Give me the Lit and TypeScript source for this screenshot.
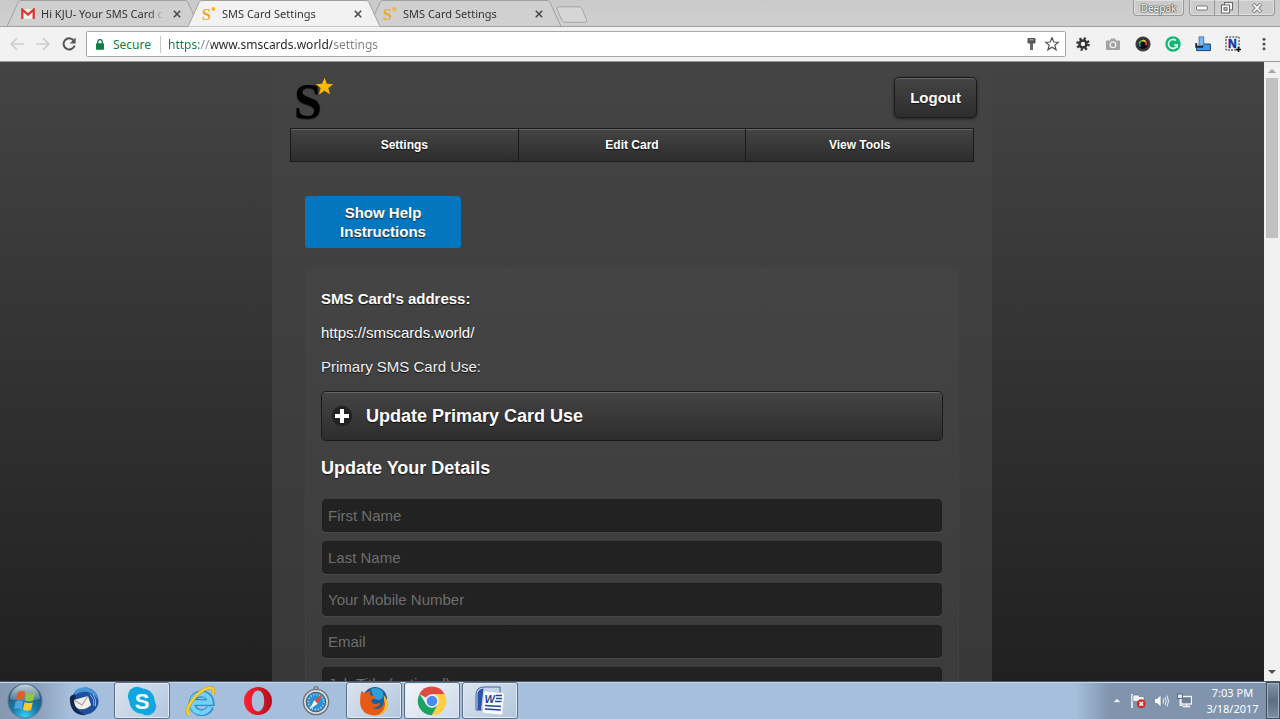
import { LitElement, html, css, svg, nothing } from "lit";
import { customElement, property } from "lit/decorators.js";

const starPoints = "12,1 15,8.6 23,9 16.8,14 19,22 12,17.4 5,22 7.2,14 1,9 9,8.6";

const icons: Record<string, unknown> = {
  gmail: svg`<svg width="14" height="12" viewBox="0 0 14 12"><rect x="1" y="1" width="12" height="10" fill="#eee"/><path d="M1.3 11V1.6L7 6.6l5.7-5V11" fill="none" stroke="#d8382b" stroke-width="2.2"/></svg>`,
  sms: svg`<svg width="14" height="16" viewBox="0 0 14 16"><text x="0" y="14" font-family="Liberation Serif, serif" font-weight="700" font-size="16" fill="#e9a92c">S</text><circle cx="11.3" cy="3" r="1.9" fill="#f9b61d"/></svg>`,
  close: svg`<svg width="8" height="8" viewBox="0 0 8 8"><path d="M.8.8l6.4 6.4M7.2.8L.8 7.2" stroke="#4a4a4a" stroke-width="1.6"/></svg>`,
  back: svg`<svg width="14" height="14" viewBox="0 0 14 14"><path d="M14 7H1.5M7 1.2L1.2 7 7 12.8" fill="none" stroke="#cecece" stroke-width="1.7"/></svg>`,
  forward: svg`<svg width="14" height="14" viewBox="0 0 14 14"><path d="M0 7h12.5M7 1.2L12.8 7 7 12.8" fill="none" stroke="#cecece" stroke-width="1.7"/></svg>`,
  reload: svg`<svg width="14" height="14" viewBox="0 0 14 14"><path d="M11.6 3.4A5.6 5.6 0 1 0 12.6 8.4" fill="none" stroke="#555" stroke-width="2"/><path d="M13.6.4v6H7.8z" fill="#555"/></svg>`,
  lock: svg`<svg width="8" height="11" viewBox="0 0 8 11"><rect y="4.3" width="8" height="6.4" rx=".8" fill="#0b8043"/><path d="M1.8 5V2.8a2.2 2.2 0 0 1 4.4 0V5" fill="none" stroke="#0b8043" stroke-width="1.3"/></svg>`,
  key: svg`<svg width="9" height="12" viewBox="0 0 9 12"><rect x=".5" width="8" height="5.5" rx="1.2" fill="#555"/><rect x="3" y="5" width="3" height="7" fill="#666"/><path d="M2.5 1.8h4" stroke="#bbb"/></svg>`,
  star: svg`<svg width="14" height="14" viewBox="0 0 24 24"><polygon points=${starPoints} fill="none" stroke="#505050" stroke-width="2"/></svg>`,
  gear: svg`<svg width="14" height="14" viewBox="0 0 14 14"><circle cx="7" cy="7" r="3.5" fill="none" stroke="#333" stroke-width="2.6"/><circle cx="7" cy="7" r="5.6" fill="none" stroke="#333" stroke-width="2.4" stroke-dasharray="2.2 2.2"/></svg>`,
  camera: svg`<svg width="14" height="12" viewBox="0 0 14 12"><path d="M1 2.4h3L5 .5h4l1 1.9h3q1 0 1 1V11q0 1-1 1H1q-1 0-1-1V3.4q0-1 1-1z" fill="#a3a3a3"/><circle cx="7" cy="6.8" r="2.9" fill="#a3a3a3" stroke="#f2f2f2" stroke-width="1.3"/></svg>`,
  lens: svg`<svg width="16" height="16" viewBox="0 0 16 16"><circle cx="8" cy="8" r="7.6" fill="#3a3a40"/><circle cx="8" cy="8" r="5" fill="#0c0c12"/><path d="M4.4 8A3.6 3.6 0 0 1 7 4.6" stroke="#38b54a" stroke-width="2" fill="none"/><path d="M7 4.6A3.6 3.6 0 0 1 10.8 6" stroke="#e8c52c" stroke-width="2" fill="none"/><path d="M10.8 6a3.6 3.6 0 0 1 .2 3.4" stroke="#e23c3c" stroke-width="2" fill="none"/><path d="M4.4 8a3.6 3.6 0 0 0 1.2 2.6" stroke="#3c7be2" stroke-width="1.6" fill="none"/></svg>`,
  grammarly: svg`<svg width="16" height="16" viewBox="0 0 16 16"><circle cx="8" cy="8" r="7.7" fill="#15b573"/><path d="M11 4.6A4.5 4.5 0 1 0 12.3 9H9" fill="none" stroke="#e9fff5" stroke-width="1.6"/><path d="M12.3 8.5v3.3" stroke="#e9fff5" stroke-width="1.4"/></svg>`,
  blocks: svg`<svg width="16" height="16" viewBox="0 0 16 16"><path d="M7 8h8.4v6.6H1.6V10H7z" fill="#3e9af0" stroke="#23405e"/><path d="M4 .8h4.800v8.800H4z" fill="#7bb8f0" stroke="#456a9a" stroke-width=".8"/><path d="M1.200 7v3.800h7" fill="none" stroke="#20262e" stroke-width="1.800"/></svg>`,
  ntool: svg`<svg width="16" height="16" viewBox="0 0 16 16"><rect x="1" y="1" width="13" height="13" fill="#f4f4ff" stroke="#222" stroke-dasharray="2 1.2"/><text x="3" y="12" font-family="Liberation Sans, sans-serif" font-weight="700" font-size="12" fill="#12379a" stroke="#12379a" stroke-width=".5">N</text><path d="M13.5 11v5M11 13.5h5" stroke="#111" stroke-width="1.6"/></svg>`,
  menu: svg`<svg width="4" height="14" viewBox="0 0 4 14" fill="#555"><circle cx="2" cy="2.2" r="1.5"/><circle cx="2" cy="7" r="1.5"/><circle cx="2" cy="11.8" r="1.5"/></svg>`,
  min: svg`<svg width="12" height="6" viewBox="0 0 12 6"><rect x=".5" y="1" width="11" height="4" rx="1" fill="#fff" stroke="#777"/></svg>`,
  restore: svg`<svg width="12" height="12" viewBox="0 0 12 12"><rect x="3.5" y=".5" width="8" height="7.5" fill="#f4f4f4" stroke="#666"/><rect x=".5" y="3" width="8" height="8" fill="#fff" stroke="#666"/><rect x="3" y="5.7" width="3" height="2.6" fill="#ccc" stroke="#666"/></svg>`,
  winClose: svg`<svg width="12" height="10" viewBox="0 0 12 10"><path d="M2 1l8 8M10 1L2 9" stroke="#777" stroke-width="3.6"/><path d="M2.4 1.4l7.2 7.2M9.6 1.4L2.4 8.6" stroke="#fafafa" stroke-width="1.8"/></svg>`,
  plus: svg`<svg width="22" height="22" viewBox="0 0 22 22"><circle cx="11" cy="11" r="10.2" fill="#222"/><path d="M11 4v14M4 11h14" stroke="#fff" stroke-width="4"/></svg>`,
  up: svg`<svg width="8" height="4" viewBox="0 0 8 4"><path d="M0 4l4-4 4 4z" fill="#a3a3a3"/></svg>`,
  down: svg`<svg width="8" height="4" viewBox="0 0 8 4"><path d="M0 0l4 4 4-4z" fill="#505050"/></svg>`,
  windows: svg`<svg width="36" height="36" viewBox="0 0 36 36"><defs><radialGradient id="orb" cx=".5" cy=".95" r=".85"><stop offset="0" stop-color="#35d3f5"/><stop offset=".45" stop-color="#1a79a8"/><stop offset="1" stop-color="#24506f"/></radialGradient><linearGradient id="gloss" x2="0" y2="1"><stop offset="0" stop-color="#fff" stop-opacity=".75"/><stop offset="1" stop-color="#fff" stop-opacity=".15"/></linearGradient></defs><circle cx="18" cy="18" r="17" fill="url(#orb)" stroke="#54758f"/><path d="M3 16a15 14.5 0 0 1 30 0q-15 4-30 0z" fill="url(#gloss)"/><path d="M10.6 9.2q4-2.2 7.6-.2l-1.6 7.8q-3.8-1.8-7.6.2z" fill="#ea5a24"/><path d="M19.6 9.6q4 2 8.4.2l-1.8 7.8q-4 1.8-8.2-.2z" fill="#93c83e"/><path d="M8.6 18.6q4-2 7.6-.2l-1.6 7.6q-3.8-1.8-7.6.2z" fill="#4ba4e6"/><path d="M17.6 19q4 2 8.2.2L24 27q-4 1.8-8-.4z" fill="#fdc72f"/></svg>`,
  thunderbird: svg`<svg width="30" height="30" viewBox="0 0 30 30"><circle cx="16" cy="15" r="13.500" fill="#1f4f9f"/><path d="M6 4.500q7-5 14-2.500 8 3 9.500 12-4-6-11-8-7-1-13 3z" fill="#4a93d8"/><path d="M10 2q3-1 5 0M21 8q5 5 4 12M24 8q4 6 2.500 12" fill="none" stroke="#7db8ea" stroke-width="1"/><path d="M1 11q3-4 6-1-3 8 1 13 4 5 10 6-10 1-14-5-4-6-3-13z" fill="#16264f"/><path d="M5 14l14-4 3 9q-4 5-12 4-5-2-5-9z" fill="#f2f0ec"/><path d="M5 14l8 5 6-9" fill="none" stroke="#a99f94" stroke-width="1.2"/></svg>`,
  skype: svg`<svg width="30" height="30" viewBox="0 0 30 30"><circle cx="10" cy="10" r="9.2" fill="#0fa6e2"/><circle cx="20" cy="20" r="9.2" fill="#0fa6e2"/><circle cx="15" cy="15" r="12.6" fill="#0fa6e2"/><text x="15" y="22.6" text-anchor="middle" font-family="Liberation Sans, sans-serif" font-weight="700" font-size="22" fill="#fff">S</text></svg>`,
  ie: svg`<svg width="30" height="30" viewBox="0 0 30 30"><path d="M25.500 20.500A9.400 9.400 0 1 1 26 16.500H9" fill="none" stroke="#2a8fcf" stroke-width="7"/><path d="M25 20.500A9.400 9.400 0 1 1 25.500 16.500H9" fill="none" stroke="#74d0f5" stroke-width="4.600"/><path d="M5 28.500q-6-2 2-13.500T24 1.800q6-1 4 6" fill="none" stroke="#c99a14" stroke-width="3.200"/><path d="M5 28.500q-6-2 2-13.500T24 1.800q6-1 4 6" fill="none" stroke="#fbd83a" stroke-width="2"/></svg>`,
  opera: svg`<svg width="30" height="30" viewBox="0 0 30 30"><defs><linearGradient id="op" x2="1"><stop offset="0" stop-color="#ff1f33"/><stop offset="1" stop-color="#b3101e"/></linearGradient></defs><path fill-rule="evenodd" d="M15 1a14 14 0 1 0 0 28 14 14 0 1 0 0-28zM15 4.6c4 0 6.2 4.6 6.2 10.4S19 25.4 15 25.4 8.8 20.8 8.8 15 11 4.6 15 4.6z" fill="url(#op)"/></svg>`,
  safari: svg`<svg width="28" height="30" viewBox="0 0 28 30"><circle cx="14" cy="2.6" r="2" fill="none" stroke="#777" stroke-width="1.2"/><circle cx="14" cy="16" r="12.6" fill="#d9dcdf" stroke="#6e7276" stroke-width="1.4"/><circle cx="14" cy="16" r="9.8" fill="#2c8fd0" stroke="#4b5c6c"/><circle cx="14" cy="16" r="7.6" fill="none" stroke="#bfe2f6" stroke-width="1.6" stroke-dasharray="1 2"/><path d="M20.5 8.5l-4.8 9.2-3.4-3.4z" fill="#e04b2f"/><path d="M7.5 23.5l4.8-9.2 3.4 3.4z" fill="#f3f6f8"/></svg>`,
  firefox: svg`<svg width="30" height="30" viewBox="0 0 30 30"><circle cx="16" cy="13" r="12" fill="#17609f"/><path d="M12 3q7-3 12 3 1 5-3 8l-6-1z" fill="#2f9fd9"/><path d="M2.5 5q2 2 4 2 3-2 6-2-2 2-1.5 4 3 1 5.5 1.5-.5 2-4 3.5 0 3 3 4 3 0 5-1 2 1-1 3-3 2-6 1 5 4 9 0 4-4 2-12 5 6 4 11-2 9-12.5 9.5Q3 29 1.2 18 .8 10 2.5 5z" fill="#e55b16"/><path d="M24.5 9q5 6 4 11-2 8-10 9.3 8-4 7.5-12z" fill="#fbc52d"/></svg>`,
  chrome: svg`<svg width="30" height="30" viewBox="0 0 30 30"><path d="M15 15L2.4 8A14.3 14.3 0 0 1 28 9z" fill="#dd4b3e"/><path d="M15 15V8h12.4A14.3 14.3 0 0 1 14 29.3L21 18z" fill="#ffce42"/><path d="M15 15l5.6 4-6 10.3A14.3 14.3 0 0 1 2.6 7.9L9 18z" fill="#1aa260"/><circle cx="15" cy="15" r="6.8" fill="#f4f4f4"/><circle cx="15" cy="15" r="5.3" fill="#4a8af4"/></svg>`,
  word: svg`<svg width="30" height="30" viewBox="0 0 30 30"><path d="M1 24V9q0-8 8-8h16v23z" fill="#c4d5ef" stroke="#3e62a8"/><path d="M2.5 24V9q0-6 6-6.5L6 24z" fill="#2d54a5"/><path d="M9 5l20.5 2-2 22L7 27z" fill="#fcfdff" stroke="#b8c3d6" stroke-width=".6"/><text x="9.5" y="16.5" font-family="Liberation Sans, sans-serif" font-weight="700" font-style="italic" font-size="11" fill="#1f478f">W</text><path d="M21 9.5h6M21 12.5h6M20 15.5h6.5M10 19.5l16 1M9.8 23l16 1" stroke="#1f478f" stroke-width="1.7"/></svg>`,
  trayUp: svg`<svg width="8" height="5" viewBox="0 0 8 5"><path d="M0 4.5L4 .5l4 4z" fill="#eef3f8" stroke="#5a6b80" stroke-width=".4"/></svg>`,
  flag: svg`<svg width="15" height="16" viewBox="0 0 15 16"><path d="M1 1v14" stroke="#f4f4f4" stroke-width="1.6"/><path d="M2 2h6v1.5h5V10H8V8.5H2z" fill="#f4f4f4" stroke="#596a7e" stroke-width=".6"/><circle cx="10.3" cy="10.8" r="4.5" fill="#d92a20"/><path d="M8.5 9l3.6 3.6M12.1 9l-3.6 3.6" stroke="#fff" stroke-width="1.5"/></svg>`,
  volume: svg`<svg width="15" height="14" viewBox="0 0 15 14"><path d="M.5 4.5H3L7 .8v12.4L3 9.5H.5z" fill="#fafafa" stroke="#5a6b80" stroke-width=".6"/><path d="M9 4.5q1.6 2.5 0 5M11 3q2.6 4 0 8M13 1.5q3 5.5 0 11" fill="none" stroke="#eef3f8"/></svg>`,
  network: svg`<svg width="15" height="15" viewBox="0 0 15 15"><rect x="4" y="3.5" width="10.5" height="7.5" fill="#6d8199" stroke="#fafafa" stroke-width="1.3"/><path d="M6 13.5h7M9.5 11v2.5" stroke="#fafafa" stroke-width="1.4"/><rect x=".5" y="1" width="5" height="4.5" fill="#dfe6ee" stroke="#46566a" stroke-width=".8"/><path d="M3 6v6.500h3" fill="none" stroke="#fafafa"/></svg>`,
};

const iconButtonCss = css`
  button {
    font: inherit;
    color: inherit;
    background: none;
    border: 0;
    padding: 0;
    margin: 0;
  }
  svg {
    display: block;
    flex: none;
  }
`;

@customElement("browser-tab")
class BrowserTab extends LitElement {
  @property() icon = "sms";
  @property() label = "";
  @property({ type: Boolean, reflect: true }) active = false;

  static styles = [
    iconButtonCss,
    css`
      :host {
        display: grid;
        width: 192px;
        height: 27px;
        margin-right: -11px;
      }
      :host([active]) {
        z-index: 1;
      }
      .shape,
      .row {
        grid-area: 1 / 1;
      }
      .shape {
        width: 100%;
        height: 100%;
      }
      .row {
        display: flex;
        align-items: center;
        padding: 0 18px 0 14px;
        gap: 6px;
      }
      .title {
        flex: 1;
        overflow: hidden;
        white-space: nowrap;
        color: #333;
        -webkit-mask-image: linear-gradient(90deg, #000 108px, transparent 123px);
      }
    `,
  ];

  render() {
    return html`
      <svg class="shape" viewBox="0 0 192 27" preserveAspectRatio="none">
        <path
          d="M0 26.5L11 2.5Q12 .5 14 .5H178Q180 .5 181 2.5L192 26.5"
          fill=${this.active ? "#f2f2f2" : "#d0d0d0"}
          stroke="#a0a0a0"
        />
        ${this.active ? nothing : svg`<path d="M0 26.5H192" stroke="#a0a0a0" />`}
      </svg>
      <div class="row">
        ${icons[this.icon]}
        <span class="title">${this.label}</span>
        <button aria-label="Close tab">${icons.close}</button>
      </div>
    `;
  }
}

@customElement("browser-chrome")
class BrowserChrome extends LitElement {
  static styles = [
    iconButtonCss,
    css`
      :host {
        display: block;
        font: 12px "Noto Sans", sans-serif;
        background: #f2f2f2;
        border-bottom: 1px solid #999;
      }
      .strip {
        display: flex;
        height: 27px;
        padding: 0 5px 0 7px;
        background: linear-gradient(#cacaca, #d0d0d0);
        box-shadow: inset 0 -1px #a0a0a0;
        font-size: 11px;
      }
      .newtab {
        margin: 6px auto 0 4px;
        align-self: flex-start;
      }
      .user,
      .controls {
        display: flex;
        height: 16px;
        box-sizing: border-box;
        border: 1px solid #999;
        border-top: 0;
        border-radius: 0 0 4px 4px;
        box-shadow: inset 0 0 0 1px #dedede;
      }
      .user {
        align-items: center;
        justify-content: center;
        width: 51px;
        margin-right: 5px;
        font-size: 10px;
        color: #fff;
        text-shadow: 0 0 1px #333, 0 0 1px #333, 0 0 2px #555;
      }
      .controls button {
        display: grid;
        place-items: center;
        width: 24px;
      }
      .controls button + button {
        border-left: 1px solid #999;
      }
      .controls button:last-child {
        width: 36px;
      }
      .bar {
        display: flex;
        align-items: center;
        height: 34px;
        padding: 0 14px 0 10px;
      }
      .nav {
        display: flex;
        gap: 12px;
        margin-right: 10px;
      }
      .omnibox {
        display: flex;
        flex: 1;
        align-items: center;
        box-sizing: border-box;
        height: 26px;
        padding: 0 6px 0 9px;
        border: 1px solid #a8a8a8;
        border-radius: 2px;
        background: #fff;
      }
      .secure {
        color: #0b8043;
        margin-left: 9px;
        padding-right: 9px;
        border-right: 1px solid #c8c8c8;
      }
      .url {
        flex: 1;
        min-width: 0;
        margin-left: 7px;
        padding: 0;
        border: 0;
        outline: 0;
        font: inherit;
        color: #333;
        background: linear-gradient(
          90deg,
          #0b8043 31px,
          #8a8a8a 31px 43px,
          #222 43px 164px,
          #808080 164px
        );
        -webkit-background-clip: text;
        background-clip: text;
        -webkit-text-fill-color: transparent;
      }
      .inbox {
        display: flex;
        align-items: center;
        gap: 9px;
      }
      .tools {
        display: flex;
        align-items: center;
        margin-left: 2px;
      }
      .tools button {
        display: grid;
        place-items: center;
        width: 30px;
        height: 16px;
      }
      .tools button:last-child {
        width: 4px;
        margin-left: 14px;
      }
    `,
  ];

  render() {
    const tools = [
      ["gear", "Options"],
      ["camera", "Screenshot"],
      ["lens", "Color picker"],
      ["grammarly", "Grammarly"],
      ["blocks", "Extension"],
      ["ntool", "Nimbus"],
      ["menu", "Menu"],
    ];
    return html`
      <div class="strip">
        <browser-tab icon="gmail" label="Hi KJU- Your SMS Card c"></browser-tab>
        <browser-tab label="SMS Card Settings" active></browser-tab>
        <browser-tab label="SMS Card Settings"></browser-tab>
        <button class="newtab" aria-label="New tab">
          <svg width="34" height="18" viewBox="0 0 34 18">
            <path
              d="M4.5 .8H25q2 0 3 2l4.5 11q.8 2.5-1.500 2.5H11q-2 0-3-2L3 3Q2.500 .8 4.500 .8z"
              fill="#d6d6d6"
              stroke="#a6a6a6"
            />
          </svg>
        </button>
        <button class="user">Deepak</button>
        <div class="controls">
          <button aria-label="Minimize">${icons.min}</button>
          <button aria-label="Restore">${icons.restore}</button>
          <button aria-label="Close">${icons.winClose}</button>
        </div>
      </div>
      <div class="bar">
        <div class="nav">
          <button aria-label="Back">${icons.back}</button>
          <button aria-label="Forward">${icons.forward}</button>
          <button aria-label="Reload">${icons.reload}</button>
        </div>
        <div class="omnibox">
          ${icons.lock}
          <span class="secure">Secure</span>
          <input class="url" aria-label="Address" .value=${"https://www.smscards.world/settings"} />
          <div class="inbox">
            <button aria-label="Saved password">${icons.key}</button>
            <button aria-label="Bookmark">${icons.star}</button>
          </div>
        </div>
        <div class="tools">
          ${tools.map(([icon, name]) => html`<button aria-label=${name}>${icons[icon]}</button>`)}
        </div>
      </div>
    `;
  }
}

@customElement("settings-page")
class SettingsPage extends LitElement {
  static styles = [
    iconButtonCss,
    css`
      :host {
        display: flex;
        min-height: 0;
        overflow: hidden;
        font: 15px "Liberation Sans", Arial, sans-serif;
        color: #fff;
        background: linear-gradient(#444, #202020);
        text-shadow: 0 1px 1px #111;
      }
      .view {
        flex: 1;
        min-width: 0;
      }
      .column {
        box-sizing: border-box;
        max-width: 720px;
        min-height: 100%;
        margin: 0 auto;
        padding: 15px 15px 0 18px;
        background: linear-gradient(#444, #383838 620px);
      }
      .top {
        display: flex;
        justify-content: space-between;
        align-items: flex-start;
        height: 51px;
      }
      .raised {
        box-sizing: border-box;
        border: 1px solid #1a1a1a;
        background: linear-gradient(#444, #2d2d2d);
        box-shadow: inset 0 1px #666;
        text-shadow: 0 1px 1px #111;
        font-weight: 700;
      }
      .logo {
        margin: -8px 0 0 4px;
      }
      .logout {
        padding: 0 15px;
        height: 41px;
        border-radius: 5px;
        box-shadow: inset 0 1px #666, 0 1px 3px #222;
      }
      .menu {
        display: flex;
        margin-right: 3px;
        font-size: 12px;
      }
      .menu a {
        flex: 1;
        line-height: 32px;
        text-align: center;
        text-decoration: none;
        color: #fff;
      }
      .menu a + a {
        border-left: 1px solid #1a1a1a;
      }
      .help {
        display: block;
        width: 156px;
        margin: 34px 0 0 15px;
        padding: 7px 24px;
        border-radius: 3px;
        background: #0376c0;
        line-height: 19px;
        font-weight: 700;
        text-shadow: 0 1px 1px #222;
      }
      .panel {
        margin: 20px 18px 0 15px;
        padding: 0 15px;
        border: 1px solid #424242;
        border-bottom: 0;
        background: linear-gradient(#444, #3c3c3c 400px);
      }
      p {
        margin: 0 0 14px;
        line-height: 20px;
      }
      .first {
        padding-top: 20px;
      }
      .soft {
        color: #f0f0f0;
      }
      .update {
        display: flex;
        align-items: center;
        gap: 13px;
        width: 100%;
        height: 50px;
        padding: 0 9px;
        border-radius: 5px;
        font-size: 18px;
      }
      h3 {
        margin: 16px 0 20px;
        font-size: 18px;
        line-height: 22px;
      }
      form {
        display: grid;
        gap: 9px;
        padding: 0 1px;
      }
      input {
        box-sizing: border-box;
        width: 100%;
        height: 33px;
        padding: 0 5px;
        border: 1px solid #1f1f1f;
        border-radius: 4px;
        background: #222;
        box-shadow: 0 1px #484848;
        font: inherit;
        color: #fff;
      }
      input::placeholder {
        color: #6e6e6e;
        opacity: 1;
      }
      .scroll {
        display: flex;
        flex-direction: column;
        align-items: center;
        width: 16px;
        padding: 7px 0;
        box-sizing: border-box;
        background: #f1f1f1;
      }
      .thumb {
        flex: none;
        width: 12px;
        height: 160px;
        margin: 5px 0 auto;
        background: #c1c1c1;
      }
    `,
  ];

  render() {
    const fields = ["First Name", "Last Name", "Your Mobile Number", "Email", "Job Title (optional)"];
    return html`
      <main class="view">
        <div class="column">
          <header class="top">
            <svg class="logo" width="44" height="64" viewBox="0 0 44 64">
              <text x="0" y="49" font-family="Liberation Serif, serif" font-weight="700" font-size="50" fill="#000">S</text>
              <svg x="21" y="8" width="19" height="19" viewBox="0 0 24 24">
                <polygon points=${starPoints} fill="#ffb900" />
              </svg>
            </svg>
            <button class="raised logout">Logout</button>
          </header>
          <nav class="raised menu">
            <a href="#settings">Settings</a>
            <a href="#edit">Edit Card</a>
            <a href="#tools">View Tools</a>
          </nav>
          <button class="help">Show Help Instructions</button>
          <section class="panel">
            <p class="first"><strong>SMS Card's address:</strong></p>
            <p>https://smscards.world/</p>
            <p class="soft">Primary SMS Card Use:</p>
            <button class="raised update">${icons.plus}<span>Update Primary Card Use</span></button>
            <h3>Update Your Details</h3>
            <form>
              ${fields.map((f) => html`<input type="text" placeholder=${f} aria-label=${f} />`)}
            </form>
          </section>
        </div>
      </main>
      <div class="scroll">
        ${icons.up}
        <div class="thumb"></div>
        ${icons.down}
      </div>
    `;
  }
}

@customElement("task-bar")
class TaskBar extends LitElement {
  static styles = [
    iconButtonCss,
    css`
      :host {
        display: flex;
        align-items: stretch;
        box-sizing: border-box;
        height: 38px;
        border-top: 1px solid #4b5866;
        background: linear-gradient(
          90deg,
          #8498b2,
          #8da2bd 40px,
          #a6bfdc 70px calc(100% - 205px),
          #8094ae calc(100% - 170px)
        );
        box-shadow: inset 0 1px #c4d6ea;
        font: 11px "Noto Sans", sans-serif;
        color: #fff;
      }
      button {
        display: grid;
        place-items: center;
      }
      .start {
        width: 50px;
        margin-right: 6px;
      }
      .apps {
        display: flex;
        gap: 2px;
      }
      .apps button {
        box-sizing: border-box;
        width: 56px;
      }
      .apps .open {
        border: 1px solid #5d6f86;
        border-radius: 3px;
        background: linear-gradient(135deg, #dbe4ef, #b3c6de);
        box-shadow: inset 0 0 0 1px #e2ebf5;
      }
      .apps .current {
        background: linear-gradient(135deg, #f2f5fa, #ccd9e9);
      }
      .tray {
        display: flex;
        align-items: center;
        gap: 8px;
        margin-left: auto;
      }
      .arrow {
        margin-right: 2px;
      }
      .clock {
        width: 57px;
        margin: 0 1px 0 4px;
        line-height: 16px;
        text-align: center;
      }
      .peek {
        align-self: stretch;
        box-sizing: border-box;
        width: 14px;
        margin-left: -4px;
        border: 1px solid #3e4c5e;
        background: linear-gradient(#8595a8, #5d6d82 50%, #7b8da4);
        box-shadow: inset 0 0 0 1px #9fb0c4;
      }
    `,
  ];

  render() {
    const apps = [
      ["thunderbird", ""],
      ["skype", "open"],
      ["ie", ""],
      ["opera", ""],
      ["safari", ""],
      ["firefox", "open"],
      ["chrome", "open current"],
      ["word", "open"],
    ];
    return html`
      <button class="start" aria-label="Start">${icons.windows}</button>
      <div class="apps">
        ${apps.map(([name, cls]) => html`<button class=${cls} aria-label=${name}>${icons[name]}</button>`)}
      </div>
      <div class="tray">
        <button class="arrow" aria-label="Show hidden icons">${icons.trayUp}</button>
        <button aria-label="Action center">${icons.flag}</button>
        <button aria-label="Volume">${icons.volume}</button>
        <button aria-label="Network">${icons.network}</button>
        <div class="clock">7:03 PM<br />3/18/2017</div>
        <button class="peek" aria-label="Show desktop"></button>
      </div>
    `;
  }
}

@customElement("app-root")
class AppRoot extends LitElement {
  static styles = css`
    :host {
      display: grid;
      grid-template: auto minmax(0, 1fr) auto / minmax(0, 1fr);
      height: 100vh;
      overflow: hidden;
    }
  `;

  render() {
    return html`
      <browser-chrome></browser-chrome>
      <settings-page></settings-page>
      <task-bar></task-bar>
    `;
  }
}
